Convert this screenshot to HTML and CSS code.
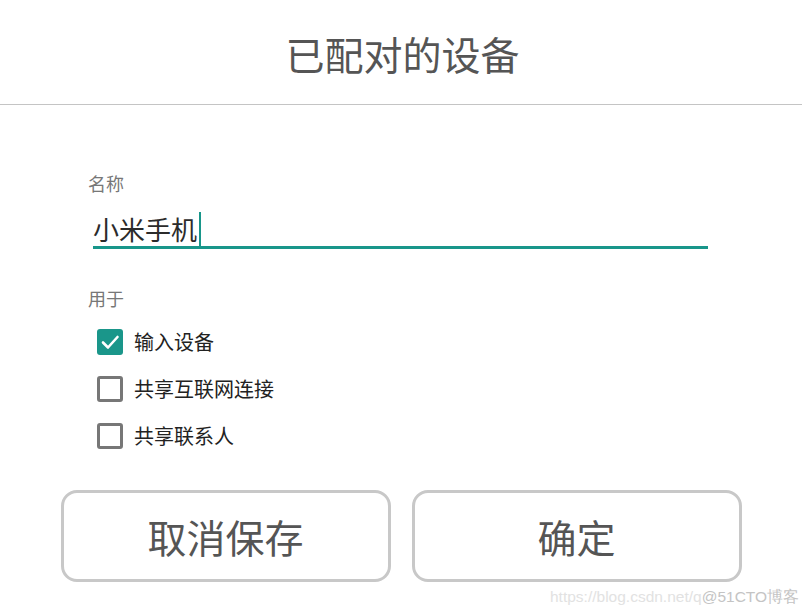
FILE: index.html
```html
<!DOCTYPE html>
<html lang="zh">
<head>
    <meta charset="UTF-8">
    <meta name="viewport" content="width=device-width, initial-scale=1.0">
    <title>已配对的设备</title>
    <link rel="stylesheet" href="styles.css">
</head>
<body>
    <!-- Title -->
    <header>
        <h1>已配对的设备</h1>
    </header>

    <!-- Form -->
    <div class="form">
        <div class="label">名称</div>
        <div class="field">
            <span class="value">小米手机</span><span class="cursor"></span>
        </div>

        <div class="label label-use">用于</div>
        <div class="options">
            <div class="option">
                <span class="box checked">
                    <svg viewBox="0 0 26 26" width="26" height="26">
                        <path d="M6 13.5 L11 18.5 L20.5 8" fill="none" stroke="#fff" stroke-width="2.6" stroke-linecap="round" stroke-linejoin="round"/>
                    </svg>
                </span>
                <span class="option-text">输入设备</span>
            </div>
            <div class="option">
                <span class="box"></span>
                <span class="option-text">共享互联网连接</span>
            </div>
            <div class="option">
                <span class="box"></span>
                <span class="option-text">共享联系人</span>
            </div>
        </div>
    </div>

    <!-- Buttons -->
    <div class="buttons">
        <button>取消保存</button>
        <button>确定</button>
    </div>

    <div class="watermark"><span class="url">https://blog.csdn.net/q</span><span class="site">@51CTO博客</span></div>
</body>
</html>
```

FILE: styles.css
```css
* {
    margin: 0;
    padding: 0;
    box-sizing: border-box;
}

body {
    font-family: "Noto Sans CJK SC", "Noto Sans", sans-serif;
    background: #fff;
    color: #333;
    width: 802px;
    height: 611px;
    position: relative;
    overflow: hidden;
}

header {
    height: 105px;
    border-bottom: 1px solid #c4c4c4;
    display: flex;
    align-items: center;
    justify-content: center;
}

header h1 {
    font-size: 39px;
    font-weight: normal;
    color: #555;
    line-height: 1;
    margin-top: 2px;
    margin-left: 3px;
}

.form {
    padding-left: 88px;
}

.label {
    margin-top: 68px;
    font-size: 18px;
    line-height: 20px;
    color: #777;
}

.label-use {
    margin-top: 39px;
}

.field {
    margin-top: 19px;
    margin-left: 5px;
    width: 615px;
    height: 37px;
    border-bottom: 3px solid #18968a;
    display: flex;
    align-items: flex-end;
}

.value {
    font-size: 26px;
    line-height: 34px;
    color: #2b2b2b;
}

.cursor {
    width: 2px;
    height: 35px;
    background: #18968a;
    margin-left: 2px;
    margin-bottom: -1px;
}

.options {
    margin-top: 10px;
    margin-left: 9px;
}

.option {
    height: 47px;
    display: flex;
    align-items: center;
    gap: 11px;
}

.box {
    width: 26px;
    height: 26px;
    border: 3px solid #777;
    border-radius: 3px;
    display: flex;
}

.box.checked {
    border: none;
    background: #1a968a;
}

.option-text {
    font-size: 20px;
    color: #222;
}

.buttons {
    margin-top: 31px;
    display: flex;
    justify-content: center;
    gap: 21px;
}

button {
    width: 330px;
    height: 92px;
    border: 3px solid #c8c8c8;
    border-radius: 16px;
    background: #fff;
    font-family: "Noto Sans CJK SC", "Noto Sans", sans-serif;
    font-size: 39px;
    color: #555;
    cursor: pointer;
}

.watermark {
    position: absolute;
    left: 550px;
    top: 587px;
    font-family: "Liberation Sans", Arial, sans-serif;
    font-size: 15.5px;
    white-space: nowrap;
}

.watermark .url {
    color: #e2e2e2;
}

.watermark .site {
    color: #c4c4c4;
}
```
